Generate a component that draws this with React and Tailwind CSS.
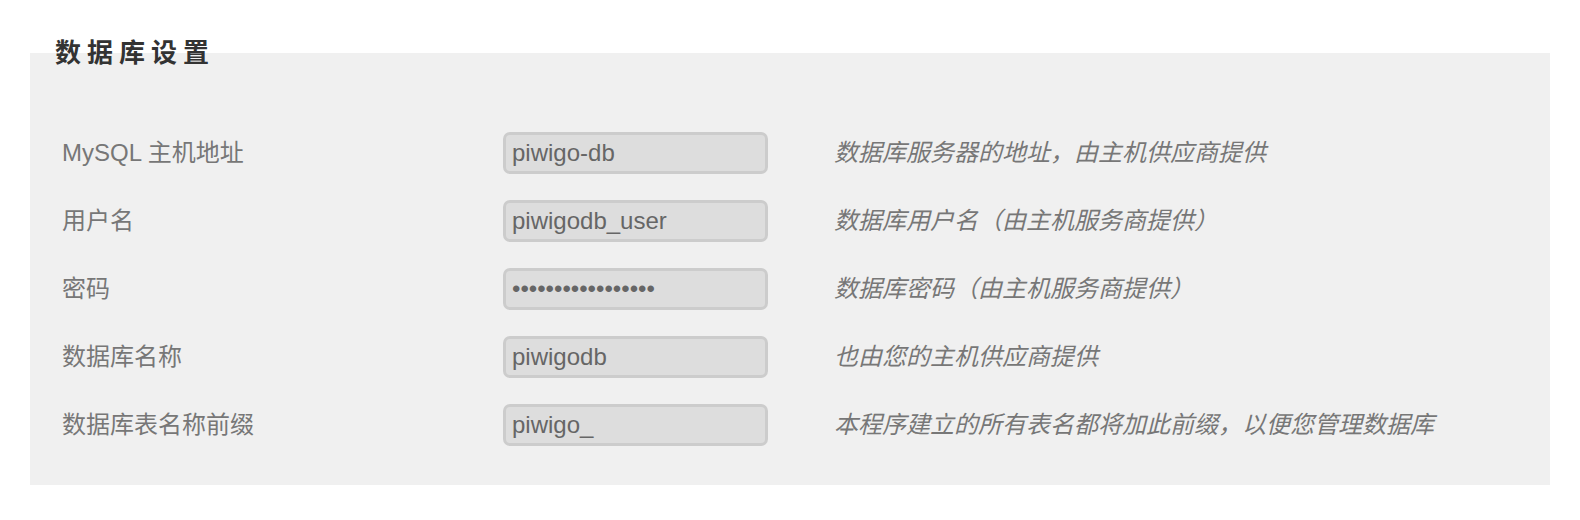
import React from 'react';

const rows = [
    { label: 'MySQL 主机地址', value: 'piwigo-db', type: 'text', hint: '数据库服务器的地址，由主机供应商提供' },
    { label: '用户名', value: 'piwigodb_user', type: 'text', hint: '数据库用户名（由主机服务商提供）' },
    { label: '密码', value: 'piwigodb_password', type: 'password', hint: '数据库密码（由主机服务商提供）' },
    { label: '数据库名称', value: 'piwigodb', type: 'text', hint: '也由您的主机供应商提供' },
    { label: '数据库表名称前缀', value: 'piwigo_', type: 'text', hint: '本程序建立的所有表名都将加此前缀，以便您管理数据库' },
];

const font = { fontFamily: '"Liberation Sans", "Noto Sans CJK SC", sans-serif' };

export default function App() {
    return (
        <div className="min-h-screen bg-white pt-[38px] px-[30px]" style={font}>
            {/* Section title sits over the top edge of the panel */}
            <h2 className="relative z-10 ml-[25px] text-[26px] leading-[30px] font-bold tracking-[6px] text-[#333333]">
                数据库设置
            </h2>

            <div className="-mt-[15px] bg-[#f0f0f0] pt-[79px] pb-[39px] pl-[32px] flex flex-col gap-[26px]">
                {rows.map((row) => (
                    <div key={row.label} className="flex items-center h-[42px]">
                        <label className="w-[441px] shrink-0 text-[24px] text-[#777777]">{row.label}</label>
                        <input
                            type={row.type}
                            defaultValue={row.value}
                            readOnly
                            className="w-[265px] h-[42px] shrink-0 border-[3px] border-[#cccccc] rounded-[7px] bg-[#dddddd] px-[6px] text-[24px] text-[#666666] outline-none"
                            style={font}
                        />
                        <span className="ml-[66px] text-[24px] italic text-[#777777]">{row.hint}</span>
                    </div>
                ))}
            </div>
        </div>
    );
}
